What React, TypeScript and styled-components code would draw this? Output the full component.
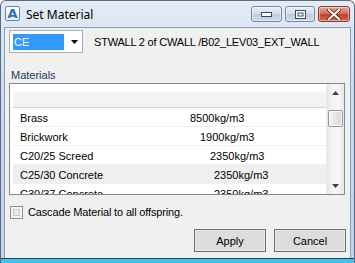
import React from "react";
import styled, { createGlobalStyle } from "styled-components";

const Global = createGlobalStyle`
  html, body { margin: 0; padding: 0; background: #ffffff; }
  body { font-family: "Liberation Sans", Arial, sans-serif; font-size: 11px; color: #000; }
`;

const Window = styled.div`
  width: 355px;
  height: 263px;
  box-sizing: border-box;
  display: flex;
  flex-direction: column;
  border: 1px solid #5b6b82;
  border-bottom: none;
  border-radius: 6px 6px 0 0;
  background: linear-gradient(180deg, #e3ebf5 0%, #cbd9ea 40%, #c2d3e8 100%);
  overflow: hidden;
`;

const TitleBar = styled.div`
  height: 26px;
  display: flex;
  align-items: flex-start;
  padding: 0 4px 0 4px;
  flex-shrink: 0;
`;

const AppIcon = styled.div`
  width: 13px;
  height: 13px;
  margin-top: 5px;
  border: 1px solid #6a86ab;
  border-radius: 2px;
  background: linear-gradient(180deg, #ffffff, #e4ecf6);
  display: flex;
  align-items: center;
  justify-content: center;
  color: #2f6fb6;
  font-weight: bold;
  font-size: 13px;
  line-height: 13px;
  font-family: "DejaVu Sans", sans-serif;
`;

const Title = styled.div`
  margin-left: 6px;
  margin-top: 6px;
  font-family: "Noto Sans", "Open Sans", sans-serif;
  font-size: 12px;
  line-height: 15px;
  color: #000;
  flex: 1;
`;

const CaptionGroup = styled.div`
  display: flex;
  gap: 3px;
  margin-top: 5px;
`;

const CaptionButton = styled.div<{ $w: number; $close?: boolean }>`
  width: ${(p) => p.$w}px;
  height: 16px;
  box-sizing: border-box;
  border: 1px solid ${(p) => (p.$close ? "#8c3a2c" : "#7486a0")};
  border-radius: 3px;
  background: ${(p) =>
    p.$close
      ? "linear-gradient(180deg, #e8a697 0%, #d7715f 45%, #c2412b 55%, #cf6a50 100%)"
      : "linear-gradient(180deg, #e9eef5 0%, #d3dde9 45%, #bfcde0 55%, #ccd8e6 100%)"};
  box-shadow: inset 0 0 0 1px rgba(255, 255, 255, 0.45);
  display: flex;
  align-items: center;
  justify-content: center;
`;

const Client = styled.div`
  flex: 1;
  margin: 0 3px 0 3px;
  background: #f0f0f0;
  border: 1px solid #8a9cb3;
  border-bottom: none;
  display: flex;
  flex-direction: column;
  padding: 2px 5px 0 4px;
`;

const BottomEdge = styled.div`
  height: 5px;
  flex-shrink: 0;
  background: linear-gradient(180deg, #2b3e58 0px, #2b3e58 1px, #37c7ea 1px, #37c7ea 100%);
`;

const TopRow = styled.div`
  display: flex;
  align-items: center;
  height: 23px;
`;

const Combo = styled.div`
  width: 74px;
  height: 23px;
  box-sizing: border-box;
  border: 1px solid #abadb3;
  background: #fff;
  display: flex;
  align-items: center;
  padding: 0 3px;
`;

const ComboSel = styled.div`
  width: 51px;
  height: 16px;
  background: #3399ff;
  color: #fff;
  font-size: 11px;
  line-height: 16px;
  padding-left: 1px;
  box-sizing: border-box;
`;

const ComboArrow = styled.div`
  flex: 1;
  display: flex;
  justify-content: center;
  align-items: center;
  padding-left: 6px;
`;

const Path = styled.div`
  margin-left: 11px;
  font-size: 11px;
  letter-spacing: -0.2px;
  white-space: nowrap;
`;

const Label = styled.div`
  margin-top: 16px;
  margin-left: 2px;
  font-size: 11px;
  line-height: 13px;
  color: #1e395b;
`;

const ListBox = styled.div`
  margin-top: 1px;
  width: 336px;
  height: 112px;
  box-sizing: border-box;
  border: 1px solid #828790;
  background: #fff;
  display: flex;
  overflow: hidden;
`;

const ListBody = styled.div`
  flex: 1;
  display: flex;
  flex-direction: column;
  overflow: hidden;
`;

const Header = styled.div`
  height: 24px;
  flex-shrink: 0;
  box-sizing: border-box;
  background: linear-gradient(180deg, #ffffff 0%, #ffffff 30%, #f3f4f6 40%, #f1f2f4 100%);
  border-bottom: 1px solid #d5d5d5;
  margin: 0 0 0 3px;
`;

const Row = styled.div<{ $hl?: boolean }>`
  height: 19px;
  flex-shrink: 0;
  box-sizing: border-box;
  border-bottom: 1px solid #f0f0f0;
  background: ${(p) => (p.$hl ? "#efefef" : "#ffffff")};
  display: flex;
  align-items: center;
  margin-left: 3px;
  padding-left: 7px;
  padding-top: 2px;
  white-space: nowrap;
  font-size: 11px;
`;

const Name = styled.span<{ $w: number }>`
  width: ${(p) => p.$w}px;
  flex-shrink: 0;
`;

const Scrollbar = styled.div`
  width: 17px;
  flex-shrink: 0;
  background: linear-gradient(90deg, #e6e6e6, #f5f5f5 30%, #f5f5f5 70%, #e8e8e8);
  border-left: 1px solid #eaeaea;
  display: flex;
  flex-direction: column;
  align-items: center;
`;

const ScrollArrow = styled.div`
  height: 17px;
  width: 17px;
  display: flex;
  align-items: center;
  justify-content: center;
`;

const Thumb = styled.div`
  width: 15px;
  height: 17px;
  margin-top: 9px;
  box-sizing: border-box;
  border: 1px solid #979797;
  border-radius: 2px;
  background: linear-gradient(90deg, #f3f3f3, #e6e6e6 50%, #d6d6d6);
  box-shadow: inset 0 0 0 1px #fafafa;
`;

const Track = styled.div`
  flex: 1;
`;

const CheckRow = styled.div`
  display: flex;
  align-items: center;
  margin-top: 10px;
  margin-left: 1px;
  height: 14px;
`;

const Checkbox = styled.div`
  width: 13px;
  height: 13px;
  box-sizing: border-box;
  border: 1px solid #8e8f8f;
  background: linear-gradient(135deg, #dcdcdc, #f6f6f6);
  box-shadow: inset 0 0 0 2px #f4f4f4, inset 0 0 0 3px #c9c9c9;
`;

const CheckLabel = styled.span`
  margin-left: 5px;
  font-size: 11px;
  letter-spacing: -0.15px;
`;

const ButtonRow = styled.div`
  display: flex;
  justify-content: flex-end;
  gap: 8px;
  margin-top: 10px;
  margin-right: -1px;
`;

const Button = styled.div`
  width: 72px;
  height: 23px;
  box-sizing: border-box;
  border: 1px solid #707070;
  background: #dddddd;
  box-shadow: inset 0 0 0 1px #e9e9e9;
  display: flex;
  align-items: center;
  justify-content: center;
  font-size: 11px;
`;

const rows = [
  { name: "Brass", value: "8500kg/m3", w: 170 },
  { name: "Brickwork", value: "1900kg/m3", w: 180 },
  { name: "C20/25 Screed", value: "2350kg/m3", w: 190 },
  { name: "C25/30 Concrete", value: "2350kg/m3", w: 194, hl: true },
  { name: "C30/37 Concrete", value: "2350kg/m3", w: 194 },
];

export default function App() {
  return (
    <>
      <Global />
      <Window>
        <TitleBar>
          <AppIcon>A</AppIcon>
          <Title>Set Material</Title>
          <CaptionGroup>
            <CaptionButton $w={31}>
              <svg width="11" height="5" viewBox="0 0 11 5">
                <rect x="0.5" y="0.5" width="10" height="4" fill="#fff" stroke="#3b4a5e" />
              </svg>
            </CaptionButton>
            <CaptionButton $w={30}>
              <svg width="11" height="9" viewBox="0 0 11 9">
                <rect x="0.5" y="0.5" width="10" height="8" fill="#fff" stroke="#3b4a5e" />
                <rect x="3" y="3" width="5" height="3" fill="none" stroke="#3b4a5e" />
              </svg>
            </CaptionButton>
            <CaptionButton $w={32} $close>
              <svg width="14" height="11" viewBox="0 0 14 11">
                <path d="M2 1 L12 10 M12 1 L2 10" stroke="#5a1a10" strokeWidth="3.6" strokeLinecap="round" />
                <path d="M2 1 L12 10 M12 1 L2 10" stroke="#ffffff" strokeWidth="2.2" strokeLinecap="round" />
              </svg>
            </CaptionButton>
          </CaptionGroup>
        </TitleBar>
        <Client>
          <TopRow>
            <Combo>
              <ComboSel>CE</ComboSel>
              <ComboArrow>
                <svg width="7" height="4" viewBox="0 0 7 4">
                  <path d="M0 0 H7 L3.5 4 Z" fill="#000" />
                </svg>
              </ComboArrow>
            </Combo>
            <Path>STWALL 2 of CWALL /B02_LEV03_EXT_WALL</Path>
          </TopRow>
          <Label>Materials</Label>
          <ListBox>
            <ListBody>
              <Header />
              {rows.map((r) => (
                <Row key={r.name} $hl={r.hl}>
                  <Name $w={r.w}>{r.name}</Name>
                  <span>{r.value}</span>
                </Row>
              ))}
            </ListBody>
            <Scrollbar>
              <ScrollArrow>
                <svg width="7" height="4" viewBox="0 0 7 4">
                  <path d="M0 4 H7 L3.5 0 Z" fill="#404040" />
                </svg>
              </ScrollArrow>
              <Thumb />
              <Track />
              <ScrollArrow>
                <svg width="7" height="4" viewBox="0 0 7 4">
                  <path d="M0 0 H7 L3.5 4 Z" fill="#404040" />
                </svg>
              </ScrollArrow>
            </Scrollbar>
          </ListBox>
          <CheckRow>
            <Checkbox />
            <CheckLabel>Cascade Material to all offspring.</CheckLabel>
          </CheckRow>
          <ButtonRow>
            <Button>Apply</Button>
            <Button>Cancel</Button>
          </ButtonRow>
        </Client>
        <BottomEdge />
      </Window>
    </>
  );
}
